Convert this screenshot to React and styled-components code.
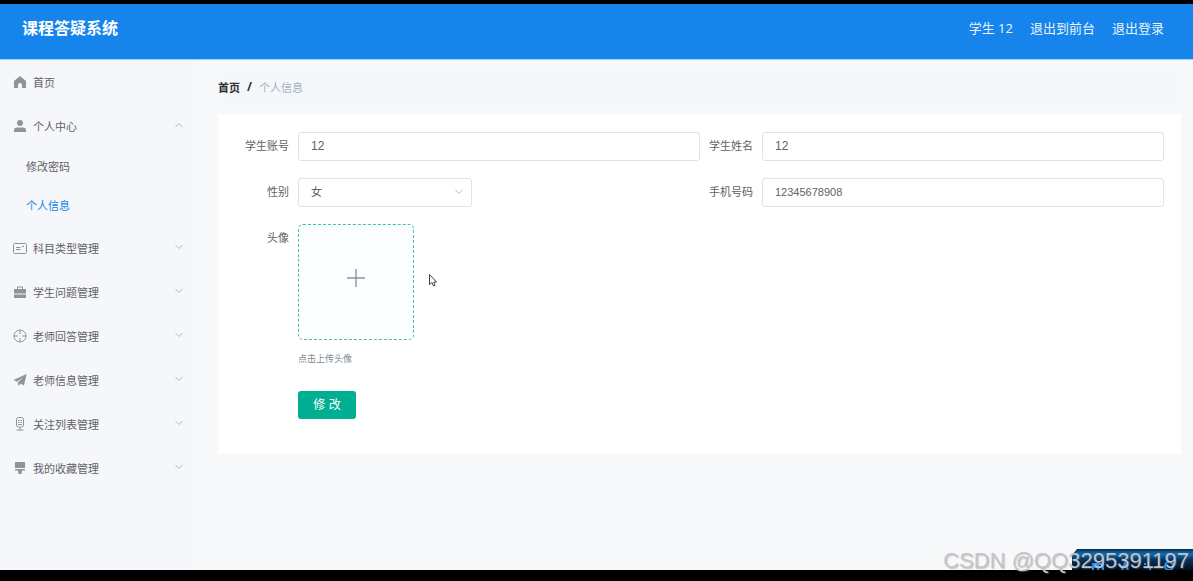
import React from 'react';
import styled, { createGlobalStyle, css } from 'styled-components';

const GlobalStyle = createGlobalStyle`
  * {
    box-sizing: border-box;
  }

  body {
    margin: 0;
    background: #000;
    font-family: "Liberation Sans", "Noto Sans CJK SC", sans-serif;
    font-size: 11px;
    color: #606266;
  }

  button, input, select {
    font-family: inherit;
  }
`;

const icons = {
  home: <path d="M7 1 L13 6 V13 H9 V10 A2 2 0 0 0 5 10 V13 H1 V6 Z" />,
  user: (
    <>
      <circle cx="7" cy="4" r="3" />
      <path d="M1 13 V11.5 Q1 8.5 4 8.5 H10 Q13 8.5 13 11.5 V13 Z" />
    </>
  ),
  postcard: (
    <g fill="none" stroke="currentColor">
      <rect x="0.5" y="2.5" width="13" height="10" rx="1" />
      <path d="M3 6.5 H7.5 M3 8.5 H7.5 M9 5.5 H11" />
    </g>
  ),
  suitcase: (
    <>
      <path d="M4 4 V1.5 H10 V4 H13 V8.5 H1 V4 Z M5 4 H9 V2.5 H5 Z" fillRule="evenodd" />
      <path d="M1 9.5 H13 V13 H1 Z" />
    </>
  ),
  aim: (
    <g fill="none" stroke="currentColor">
      <circle cx="7" cy="7" r="6" />
      <path d="M7 1 V5 M7 9 V13 M1 7 H5 M9 7 H13" />
    </g>
  ),
  promotion: <path d="M0.5 7 L13.5 1 L11 12.5 L7.5 10.5 L5.5 13 L4.8 9.5 L10 4.5 L3.8 8.8 Z" />,
  microphone: (
    <g fill="none" stroke="currentColor">
      <rect x="3.5" y="0.5" width="7" height="9.5" rx="2" />
      <path d="M5 3.5 H6.5 M7.5 3.5 H9 M5 5.5 H6.5 M7.5 5.5 H9 M5 7.5 H9 M7 10 V13 M3.5 13 H10.5" />
    </g>
  ),
  brush: <path d="M2 1 H12 V7 H2 Z M2 8 H12 V9.5 H9 L8.5 13 H5.5 L5 9.5 H2 Z" />,
};

const menus = [
  { title: '首页', icon: 'home' },
  { title: '个人中心', icon: 'user', children: ['修改密码', '个人信息'] },
  { title: '科目类型管理', icon: 'postcard', arrow: true },
  { title: '学生问题管理', icon: 'suitcase', arrow: true },
  { title: '老师回答管理', icon: 'aim', arrow: true },
  { title: '老师信息管理', icon: 'promotion', arrow: true },
  { title: '关注列表管理', icon: 'microphone', arrow: true },
  { title: '我的收藏管理', icon: 'brush', arrow: true },
];

const Chevron = ({ up }) => (
  <ChevronSvg viewBox="0 0 8 8" $up={up} aria-hidden="true">
    <path d="M0.5 2 L4 5.5 L7.5 2" />
  </ChevronSvg>
);

const App = () => {
  return (
    <Screen>
      <GlobalStyle />
      <Header>
        <Brand>课程答疑系统</Brand>
        <HeaderNav>
          <span>学生 12</span>
          <HeaderLink href="#front">退出到前台</HeaderLink>
          <HeaderLink href="#logout">退出登录</HeaderLink>
        </HeaderNav>
      </Header>

      <Body>
        <Sidebar>
          {menus.map((menu) => (
            <React.Fragment key={menu.title}>
              <MenuButton type="button">
                <MenuIcon viewBox="0 0 14 14" aria-hidden="true">{icons[menu.icon]}</MenuIcon>
                <MenuText>{menu.title}</MenuText>
                {(menu.arrow || menu.children) && <Chevron up={!!menu.children} />}
              </MenuButton>
              {menu.children && menu.children.map((child) => (
                <SubLink key={child} href="#menu" $active={child === '个人信息'}>{child}</SubLink>
              ))}
            </React.Fragment>
          ))}
        </Sidebar>

        <Main>
          <Breadcrumb>
            <strong>首页</strong>
            <Slash>/</Slash>
            <Current>个人信息</Current>
          </Breadcrumb>

          <Form onSubmit={(e) => e.preventDefault()}>
            <Field>
              <Label htmlFor="account">学生账号</Label>
              <Input id="account" defaultValue="12" $large />
            </Field>
            <Field>
              <Label htmlFor="name">学生姓名</Label>
              <Input id="name" defaultValue="12" $large />
            </Field>
            <Field>
              <Label htmlFor="sex">性别</Label>
              <SelectBox>
                <Select id="sex" defaultValue="女">
                  <option>女</option>
                  <option>男</option>
                </Select>
                <Chevron />
              </SelectBox>
            </Field>
            <Field>
              <Label htmlFor="phone">手机号码</Label>
              <Input id="phone" defaultValue="12345678908" />
            </Field>
            <WideField>
              <Label htmlFor="avatar">头像</Label>
              <div>
                <Upload id="avatar" type="button">
                  <svg width="18" height="18" viewBox="0 0 18 18" aria-hidden="true">
                    <path d="M9 0 V18 M0 9 H18" stroke="#8c939d" strokeWidth="1.4" />
                  </svg>
                </Upload>
                <Tip>点击上传头像</Tip>
                <Submit type="submit">修 改</Submit>
              </div>
            </WideField>
          </Form>
        </Main>
      </Body>

      <Pointer viewBox="0 0 8 13" aria-hidden="true">
        <path d="M0.5 0.5 V10.5 L3 8.5 L4.5 12 L6 11.5 L4.8 8 H7.5 Z" />
      </Pointer>
      <Taskbar viewBox="0 0 121 21" aria-hidden="true">
        <defs>
          <linearGradient id="bar" x1="0" y1="0" x2="0" y2="1">
            <stop offset="0" stopColor="#0b3a63" />
            <stop offset="0.25" stopColor="#0d6cb4" />
            <stop offset="0.5" stopColor="#06345f" />
            <stop offset="1" stopColor="#020d20" />
          </linearGradient>
        </defs>
        <path d="M0 21 V6 L5 0 H121 V21 Z" fill="url(#bar)" />
        <path d="M1 21 V6 L6 1 H121" fill="none" stroke="#0a2f50" />
        <g fill="none" stroke="#2b8ff0" strokeWidth="2">
          <path d="M21 21 V15 H31 V21 M26 12 V21 M21 18 H31 M50 21 L53 14 L56 21 M72 15 H74 M77 20 H79" />
          <circle cx="97" cy="17" r="4" />
        </g>
      </Taskbar>
      <Watermark>CSDN @QQ3295391197</Watermark>
    </Screen>
  );
};

export default App;

const Screen = styled.div`
  position: relative;
  display: flex;
  flex-direction: column;
  min-height: 100vh;
  border-top: 4px solid #000;
  border-bottom: 11px solid #000;
  background: #f7f8fa;
`;

const Header = styled.header`
  display: flex;
  justify-content: space-between;
  align-items: center;
  height: 56px;
  padding: 0 29px 6px 22px;
  background: #1684ea;
  border-bottom: 1px solid #a9d3fa;
  color: #fff;
`;

const Brand = styled.h1`
  margin: 0;
  font-size: 16px;
  line-height: 24px;
`;

const HeaderNav = styled.nav`
  display: flex;
  gap: 17px;
  padding-bottom: 2px;
  font-family: "Open Sans", "Noto Sans CJK SC", sans-serif;
  font-size: 13px;
  line-height: 20px;
  color: #eaf5ff;
`;

const HeaderLink = styled.a`
  color: inherit;
  text-decoration: none;
`;

const Body = styled.div`
  display: flex;
  flex: 1;
`;

const Sidebar = styled.aside`
  flex: 0 0 198px;
  background: #f5f7fb;
`;

const MenuButton = styled.button`
  display: flex;
  align-items: center;
  width: 100%;
  height: 44px;
  padding: 0 15px 0 13px;
  border: 0;
  background: none;
  color: #606266;
  font-size: 11px;
  text-align: left;
`;

const MenuIcon = styled.svg`
  width: 14px;
  height: 14px;
  margin-right: 6px;
  color: #909399;
  fill: currentColor;
`;

const MenuText = styled.span`
  flex: 1;
`;

const ChevronSvg = styled.svg`
  width: 8px;
  height: 8px;
  margin-bottom: 3px;
  fill: none;
  stroke: #b4b7be;
  ${(props) => props.$up && css`
    transform: rotate(180deg);
  `}
`;

const SubLink = styled.a`
  display: block;
  padding-left: 26px;
  line-height: 39px;
  color: ${(props) => (props.$active ? '#1684ea' : '#606266')};
  text-decoration: none;
`;

const Main = styled.main`
  flex: 1;
  padding: 6px 12px 20px 20px;
`;

const Breadcrumb = styled.nav`
  display: flex;
  align-items: center;
  gap: 7px;
  height: 41px;
  margin-bottom: 7px;
  background: #f5f7fb;
  color: #303133;
`;

const Slash = styled.strong`
  font-family: "Open Sans", sans-serif;
  font-size: 12px;
`;

const Current = styled.span`
  color: #a3b1c4;
`;

const Form = styled.form`
  display: grid;
  grid-template-columns: 1fr 1fr;
  row-gap: 17px;
  padding: 18px 17px 35px 18px;
  background: #fff;
`;

const Field = styled.div`
  display: flex;
  align-items: flex-start;
`;

const WideField = styled(Field)`
  grid-column: 1 / -1;
`;

const Label = styled.label`
  flex: 0 0 62px;
  padding-right: 9px;
  line-height: 28px;
  text-align: right;
`;

const control = css`
  height: 29px;
  padding: 0 12px 2px;
  border: 1px solid #e1e3e7;
  border-radius: 3px;
  background: #fff;
  color: #606266;
  font-size: 11px;
  outline: none;
`;

const Input = styled.input`
  ${control}
  flex: 1;
  min-width: 0;
  ${(props) => props.$large && css`
    font-size: 12px;
  `}
`;

const SelectBox = styled.div`
  position: relative;
  width: 174px;

  ${ChevronSvg} {
    position: absolute;
    top: 10px;
    right: 9px;
    pointer-events: none;
  }
`;

const Select = styled.select`
  ${control}
  width: 100%;
  appearance: none;
`;

const Upload = styled.button`
  display: flex;
  align-items: center;
  justify-content: center;
  width: 116px;
  height: 116px;
  padding: 0 0 8px;
  border: 1px dashed #42c2ac;
  border-radius: 5px;
  background: #fbfdff;
`;

const Tip = styled.p`
  margin: 11px 0 24px;
  font-size: 9px;
  line-height: 16px;
  color: #7d8793;
`;

const Submit = styled.button`
  width: 58px;
  height: 28px;
  padding: 0 0 4px;
  border: 0;
  border-radius: 3px;
  background: #00ae92;
  color: #fff;
  font-size: 12px;
`;

const Pointer = styled.svg`
  position: absolute;
  top: 270px;
  left: 429px;
  width: 8px;
  height: 13px;
  fill: #fff;
  stroke: #444;
`;

const Taskbar = styled.svg`
  position: absolute;
  right: 0;
  bottom: 0;
  width: 121px;
  height: 21px;
`;

const Watermark = styled.div`
  position: absolute;
  right: 4px;
  bottom: -4px;
  font-size: 22px;
  line-height: 26px;
  color: #c3c5c9;
  text-shadow: 1px 1px 1px rgba(120, 124, 130, 0.4);
`;
